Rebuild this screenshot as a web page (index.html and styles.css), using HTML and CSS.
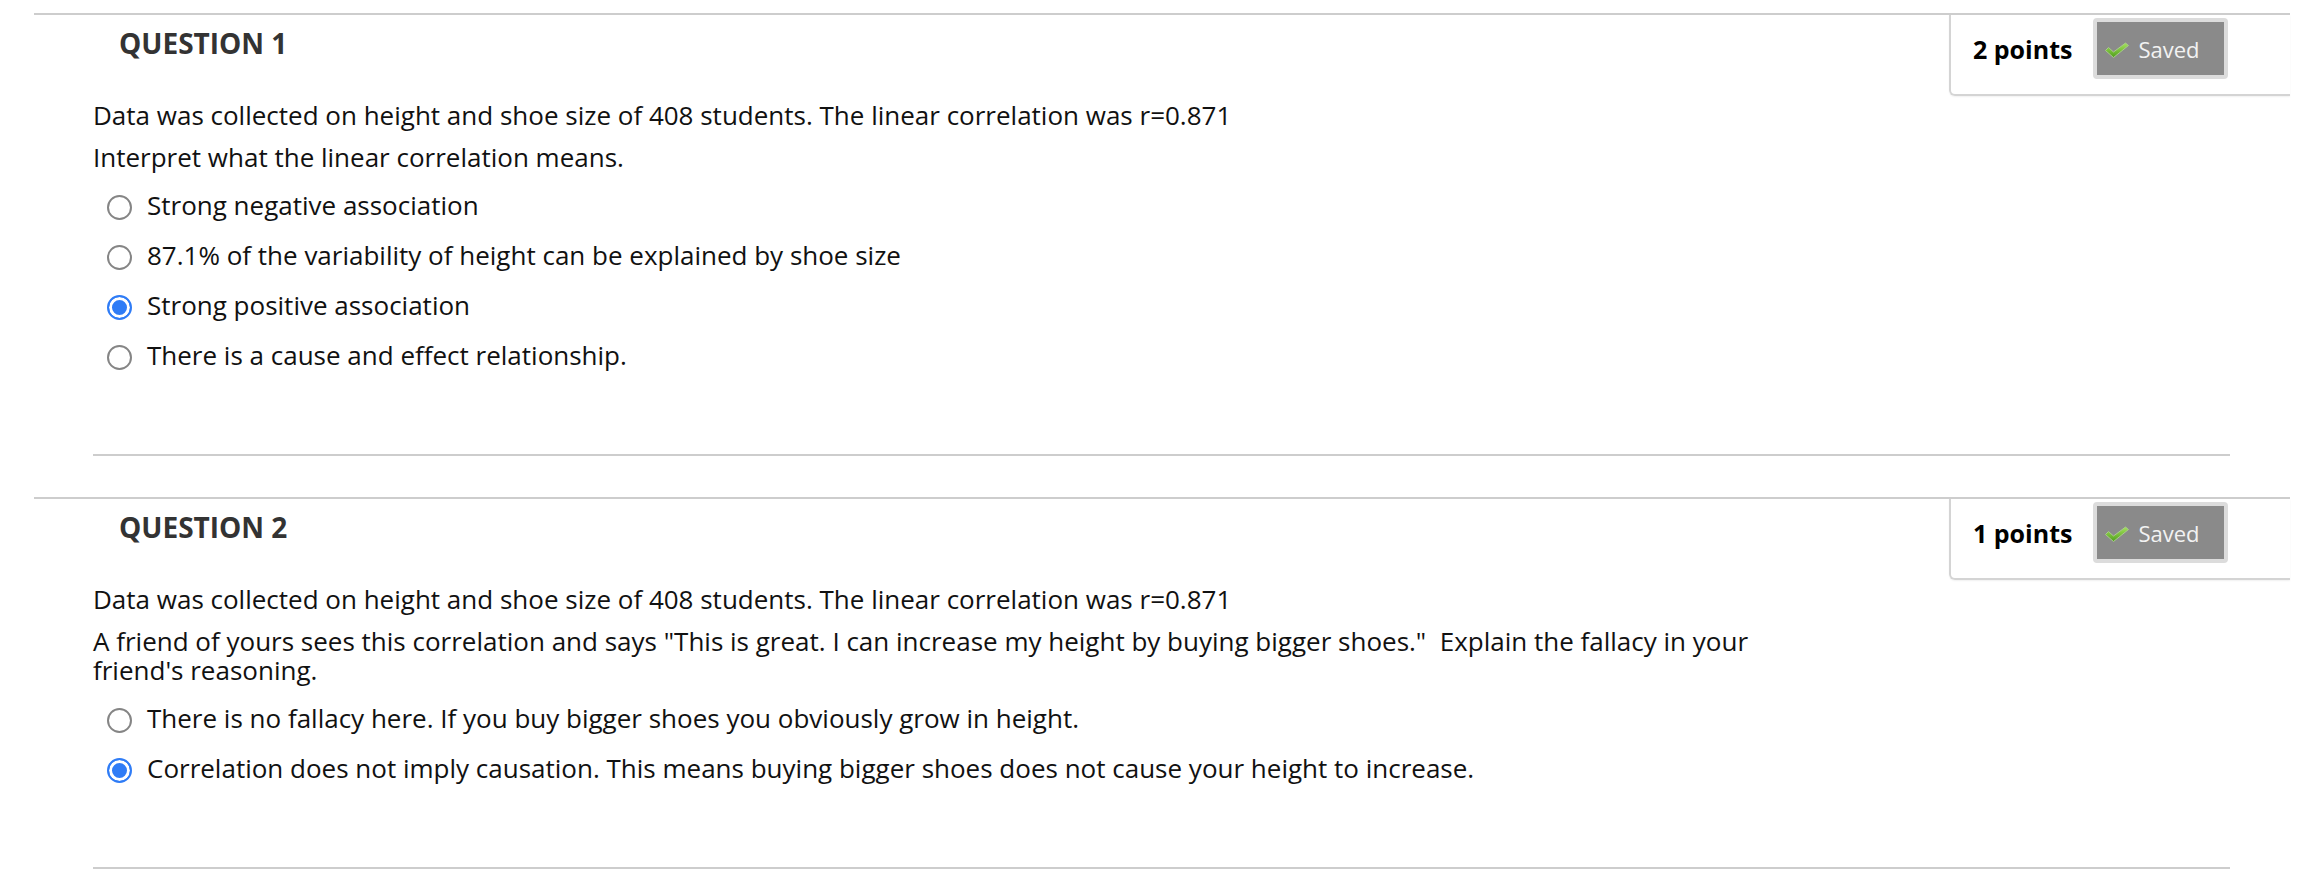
FILE: index.html
```html
<!DOCTYPE html>
<html lang="en">
<head>
<meta charset="utf-8">
<title>Test: Correlation</title>
<link rel="stylesheet" href="styles.css">
</head>
<body>
<main class="assessment">

  <section class="question">
    <div class="points-box">
      <span class="points">2 points</span>
      <span class="saved">
        <svg class="check" viewBox="0 0 26 17" width="26" height="17" aria-hidden="true">
          <defs>
            <linearGradient id="chk1" x1="0" y1="0" x2="0" y2="1">
              <stop offset="0" stop-color="#a6e35c"/>
              <stop offset="1" stop-color="#4f9e1c"/>
            </linearGradient>
          </defs>
          <path d="M1.5 8.5 L4.5 5.5 L9.5 10 L21.5 1 L24.5 3.5 L9.5 15.5 Z" fill="url(#chk1)" stroke="#a9c98e" stroke-width="1" stroke-linejoin="round"/>
        </svg>
        Saved
      </span>
    </div>
    <h3 class="q-title">QUESTION 1</h3>
    <div class="q-body">
      <p class="q-text">Data was collected on height and shoe size of 408 students. The linear correlation was r=0.871</p>
      <p class="q-text">Interpret what the linear correlation means.</p>
      <ul class="choices">
        <li><label class="choice"><input type="radio" name="q1" class="choice-radio"><span>Strong negative association</span></label></li>
        <li><label class="choice"><input type="radio" name="q1" class="choice-radio"><span>87.1% of the variability of height can be explained by shoe size</span></label></li>
        <li><label class="choice"><input type="radio" name="q1" class="choice-radio" checked><span>Strong positive association</span></label></li>
        <li><label class="choice"><input type="radio" name="q1" class="choice-radio"><span>There is a cause and effect relationship.</span></label></li>
      </ul>
    </div>
  </section>

  <section class="question">
    <div class="points-box">
      <span class="points">1 points</span>
      <span class="saved">
        <svg class="check" viewBox="0 0 26 17" width="26" height="17" aria-hidden="true">
          <defs>
            <linearGradient id="chk2" x1="0" y1="0" x2="0" y2="1">
              <stop offset="0" stop-color="#a6e35c"/>
              <stop offset="1" stop-color="#4f9e1c"/>
            </linearGradient>
          </defs>
          <path d="M1.5 8.5 L4.5 5.5 L9.5 10 L21.5 1 L24.5 3.5 L9.5 15.5 Z" fill="url(#chk2)" stroke="#a9c98e" stroke-width="1" stroke-linejoin="round"/>
        </svg>
        Saved
      </span>
    </div>
    <h3 class="q-title">QUESTION 2</h3>
    <div class="q-body">
      <p class="q-text">Data was collected on height and shoe size of 408 students. The linear correlation was r=0.871</p>
      <p class="q-text q-wide">A friend of yours sees this correlation and says "This is great. I can increase my height by buying bigger shoes."&nbsp; Explain the fallacy in your friend's reasoning.</p>
      <ul class="choices">
        <li><label class="choice"><input type="radio" name="q2" class="choice-radio"><span>There is no fallacy here. If you buy bigger shoes you obviously grow in height.</span></label></li>
        <li><label class="choice"><input type="radio" name="q2" class="choice-radio" checked><span>Correlation does not imply causation. This means buying bigger shoes does not cause your height to increase.</span></label></li>
      </ul>
    </div>
  </section>

</main>
</body>
</html>
```

FILE: styles.css
```css
html, body {
  margin: 0;
  padding: 0;
  background: #fff;
  overflow: hidden;
}

body {
  font-family: "Open Sans", "Liberation Sans", sans-serif;
  color: #111;
}

.assessment {
  padding: 13px 32px 0 34px;
}

/* one question block: grey rule on top, points box floated to the right */
.question {
  border-top: 2px solid #cdcdcd;
  margin-bottom: 41px;
}

.question:last-child {
  margin-bottom: 0;
}

.points-box {
  float: right;
  box-sizing: border-box;
  width: 341px;
  display: flex;
  align-items: center;
  gap: 21px;
  padding: 3px 0 15px 22px;
  border-left: 2px solid #d4d4d4;
  border-bottom: 2px solid #d4d4d4;
  border-bottom-left-radius: 6px;
  box-shadow: 0 1px 2px rgba(0, 0, 0, 0.06);
}

.points {
  font-size: 25px;
  font-weight: 700;
  color: #000;
}

.saved {
  box-sizing: border-box;
  height: 61px;
  width: 135px;
  display: flex;
  align-items: center;
  gap: 8px;
  padding-left: 7px;
  background: #8a8a8a;
  border: 4px solid #dcdcdc;
  border-radius: 4px;
  color: #f2f2f2;
  font-size: 22px;
}

.check {
  flex: none;
  margin-top: 3px;
}

.q-title {
  margin: 9px 0 0 85px;
  font-size: 28px;
  line-height: 38px;
  font-weight: 700;
  color: #333;
}

.q-body {
  margin: 0 60px 0 59px;
  padding: 39px 0 84px;
  border-bottom: 2px solid #cdcdcd;
}

.q-text {
  margin: 0 0 13px;
  font-size: 26px;
  line-height: 29px;
}

.q-wide {
  max-width: 1700px;
}

.choices {
  list-style: none;
  margin: 19px 0 0;
  padding: 0;
  display: flex;
  flex-direction: column;
  gap: 21px;
}

.choice {
  display: flex;
  align-items: center;
  font-size: 26px;
  line-height: 29px;
}

.choice-radio {
  appearance: none;
  -webkit-appearance: none;
  flex: none;
  box-sizing: border-box;
  width: 25px;
  height: 25px;
  margin: 3px 15px 0 14px;
  border: 2px solid #858585;
  border-radius: 50%;
  background: #fff;
}

.choice-radio:checked {
  border: 2px solid #2f7cf6;
  background: #2f7cf6;
  box-shadow: inset 0 0 0 3px #fff;
}
```
